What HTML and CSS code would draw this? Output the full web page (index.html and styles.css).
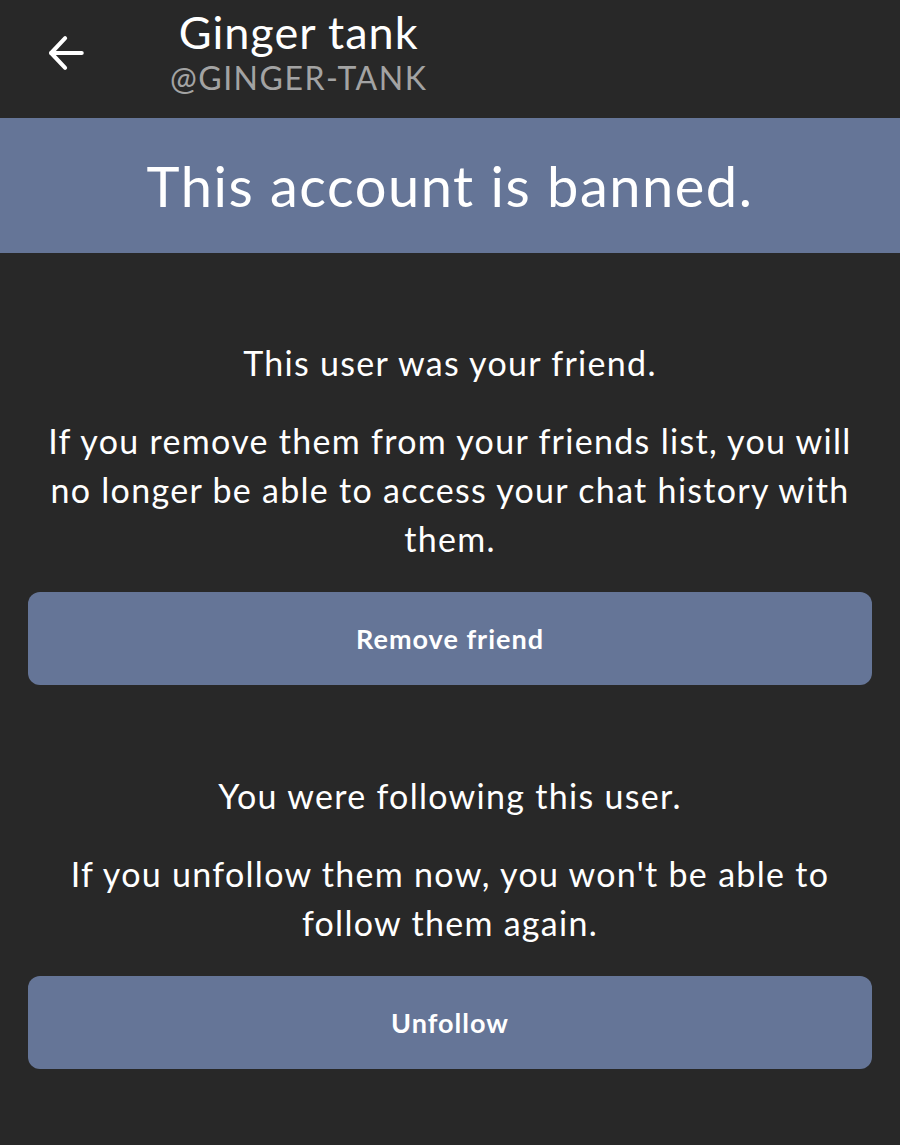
FILE: index.html
```html
<!DOCTYPE html>
<html lang="en">

<head>
    <meta charset="UTF-8">
    <meta name="viewport" content="width=device-width, initial-scale=1.0">
    <title>Ginger tank</title>
    <link rel="stylesheet" href="styles.css">
</head>

<body>
    <header class="topbar">
        <button class="back-btn" aria-label="Back">
            <svg width="42" height="42" viewBox="0 0 24 24" fill="none" stroke="#ffffff" stroke-width="2.3"
                stroke-linecap="round" stroke-linejoin="round">
                <path d="M21 12H3.5" />
                <path d="M11.5 3.5L3.5 12l8 8.5" />
            </svg>
        </button>
        <div class="user-names">
            <div class="display-name">Ginger tank</div>
            <div class="handle">@GINGER-TANK</div>
        </div>
    </header>

    <div class="banned-banner">This account is banned.</div>

    <main class="content">
        <section class="notice">
            <p class="notice-title">This user was your friend.</p>
            <p class="notice-text">If you remove them from your friends list, you will no longer be able to access
                your chat history with them.</p>
            <button class="action-btn">Remove friend</button>
        </section>

        <section class="notice">
            <p class="notice-title">You were following this user.</p>
            <p class="notice-text">If you unfollow them now, you won't be able to follow them again.</p>
            <button class="action-btn">Unfollow</button>
        </section>
    </main>
</body>

</html>
```

FILE: styles.css
```css
* {
    margin: 0;
    padding: 0;
    box-sizing: border-box;
}

body {
    font-family: Lato, "Open Sans", sans-serif;
    background: #282828;
    color: #ffffff;
    min-height: 100vh;
}

.topbar {
    height: 118px;
    display: flex;
    align-items: flex-start;
    padding: 8px 0 0 45px;
}

.back-btn {
    background: none;
    border: none;
    width: 42px;
    height: 42px;
    margin-top: 24px;
    cursor: pointer;
}

.user-names {
    margin-left: 83px;
    text-align: center;
}

.display-name {
    font-size: 45px;
    line-height: 48px;
    letter-spacing: 1px;
}

.handle {
    margin-top: 4px;
    font-size: 32px;
    line-height: 36px;
    color: #a3a3a3;
    letter-spacing: 1.5px;
}

.banned-banner {
    background: #657597;
    height: 135px;
    display: flex;
    justify-content: center;
    align-items: center;
    font-size: 56px;
    letter-spacing: 1.5px;
}

.content {
    padding: 0 28px;
}

.notice {
    text-align: center;
    padding-top: 85px;
}

.notice + .notice {
    padding-top: 86px;
}

.notice-title,
.notice-text {
    font-size: 34px;
    line-height: 49px;
    letter-spacing: 1.3px;
}

.notice-title {
    margin-bottom: 29px;
}

.notice-text {
    padding: 0 10px;
}

.action-btn {
    display: block;
    width: 100%;
    height: 93px;
    margin-top: 29px;
    background: #657597;
    border: none;
    border-radius: 12px;
    color: #ffffff;
    font-family: inherit;
    font-size: 27px;
    font-weight: 700;
    letter-spacing: 1px;
    cursor: pointer;
}
```
